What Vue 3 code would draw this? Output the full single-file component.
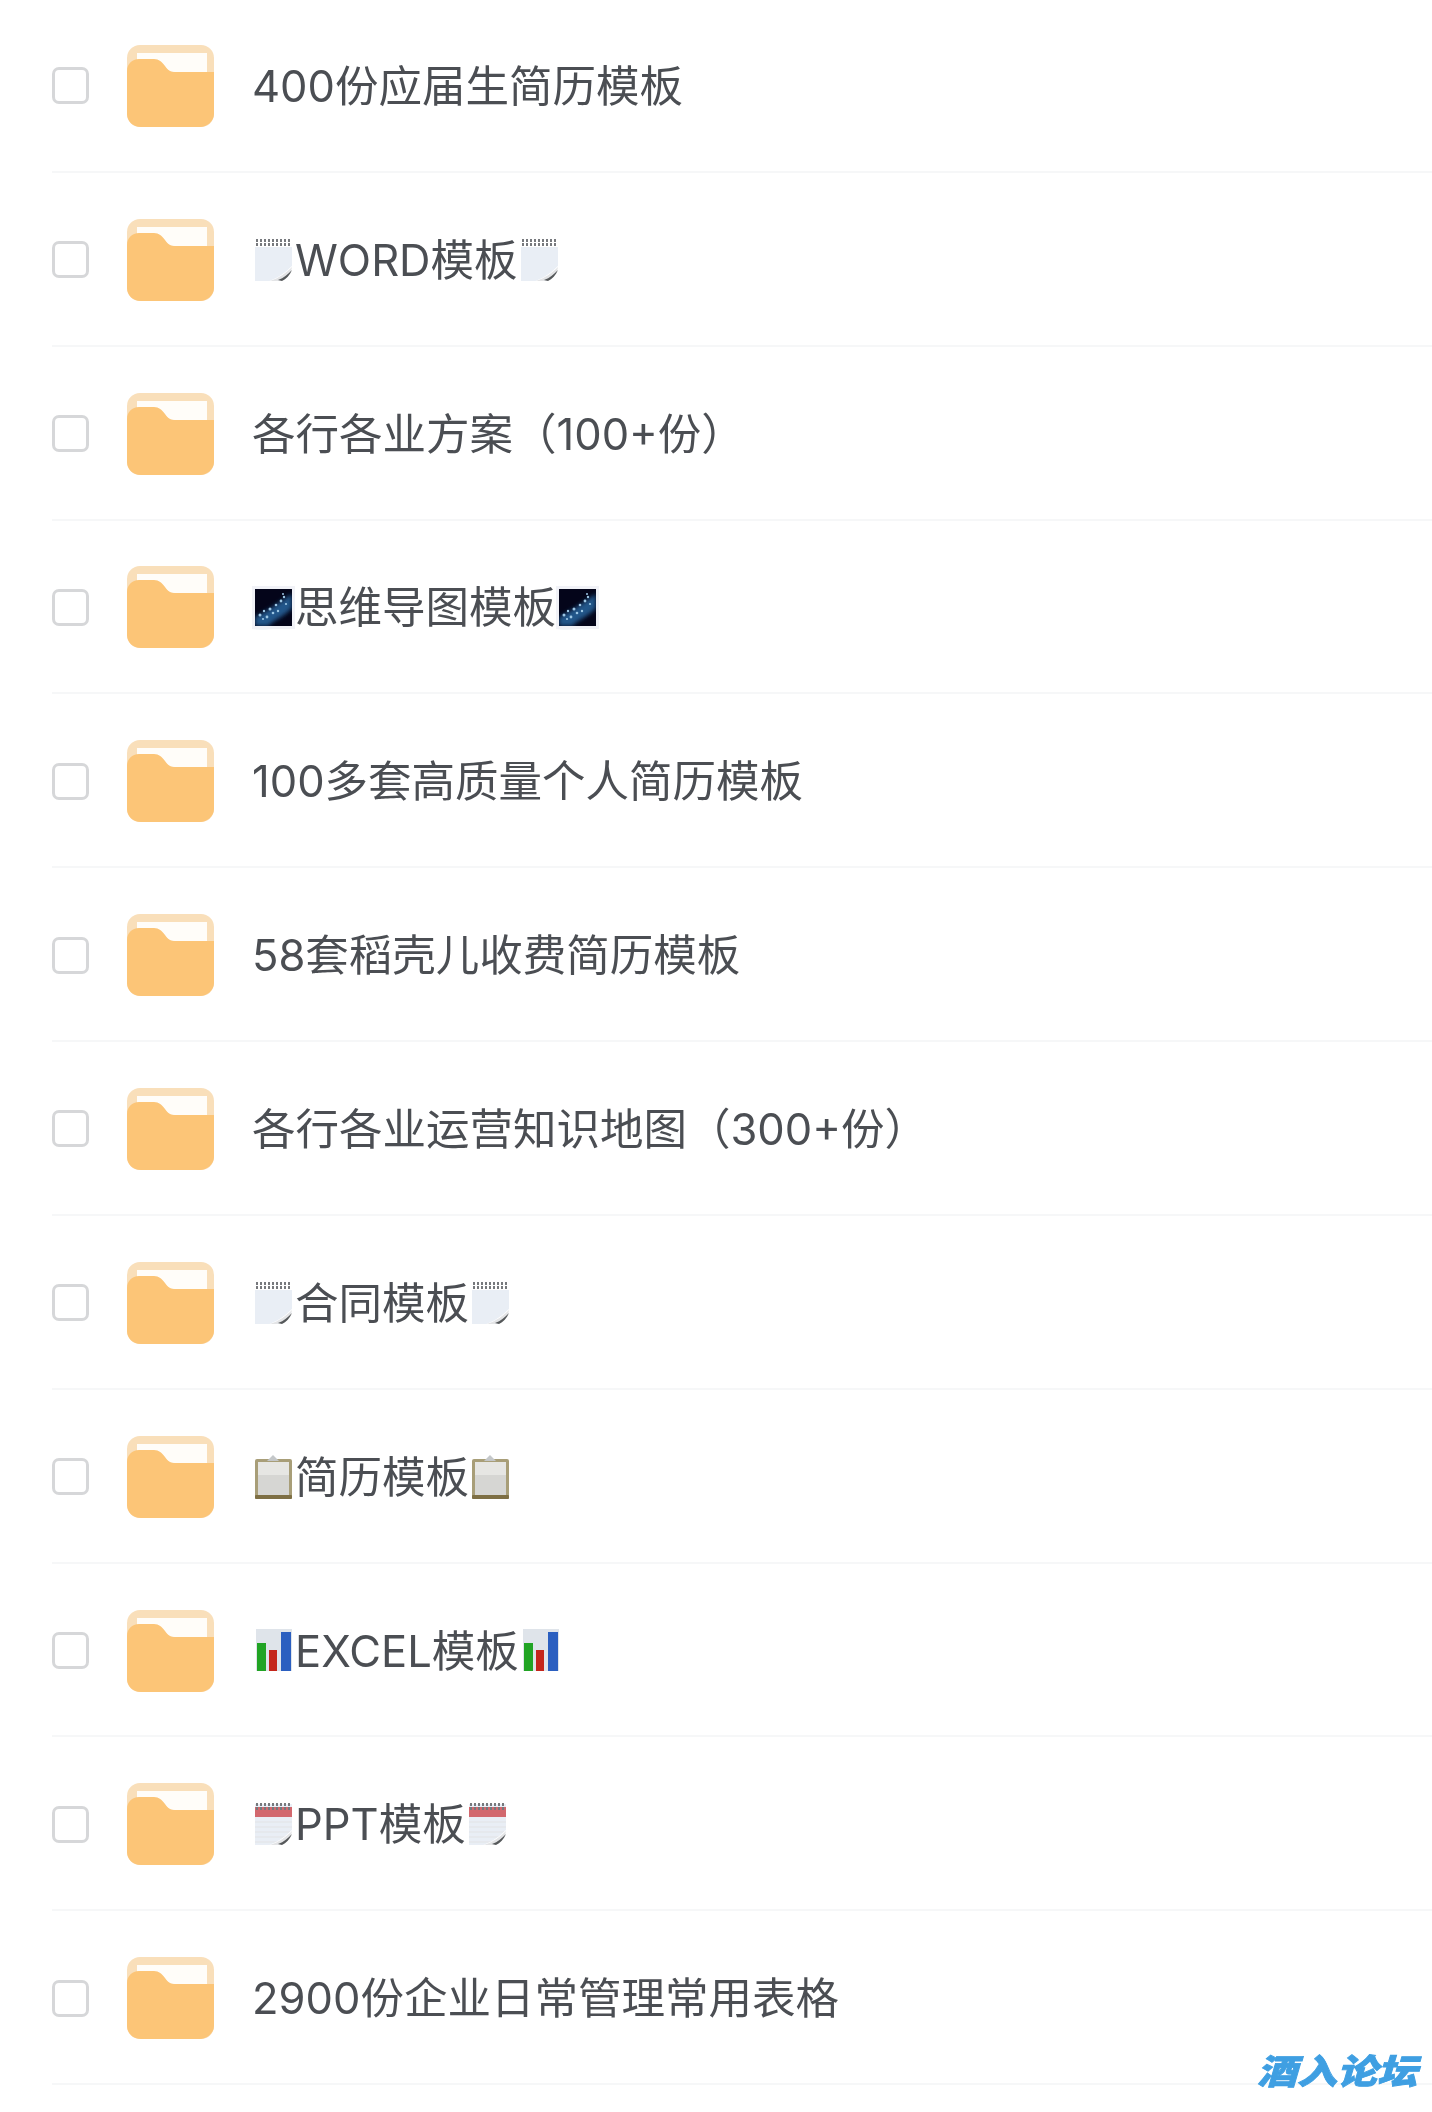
<script setup>
const rows = [
  { icon: "", text: "400份应届生简历模板" },
  { icon: "note", text: "WORD模板" },
  { icon: "", text: "各行各业方案（100+份）" },
  { icon: "galaxy", text: "思维导图模板" },
  { icon: "", text: "100多套高质量个人简历模板" },
  { icon: "", text: "58套稻壳儿收费简历模板" },
  { icon: "", text: "各行各业运营知识地图（300+份）" },
  { icon: "note", text: "合同模板" },
  { icon: "clip", text: "简历模板" },
  { icon: "chart", text: "EXCEL模板" },
  { icon: "cal", text: "PPT模板" },
  { icon: "", text: "2900份企业日常管理常用表格" },
];

const parts = (row) => (row.icon ? [row.icon, "text", row.icon] : ["text"]);

const dots = [4, 8, 12, 16, 20, 24, 28, 32, 36];
const stars = [
  [8, 31, 1.5], [12, 27, 1.2], [15, 33, 1.4], [18, 25, 1.5], [21, 29, 1.3], [24, 21, 1.3],
  [26, 27, 1.2], [29, 17, 1.4], [32, 13, 1.2], [34, 20, 1.1], [11, 35, 1.1], [31, 10, 1],
];
</script>

<template>
  <div class="page">
    <div class="list">
      <div v-for="(row, i) in rows" :key="i" class="row">
        <span class="check"></span>
        <svg class="folder" viewBox="0 0 87 82">
          <rect width="87" height="82" rx="13" fill="#f9dfba" />
          <path d="M10 8 H80 V27 H48 C42 27 40 24 37 21 C34 18 32 15 27 15 H10 Z" fill="#fffdf9" />
          <path d="M0 26 C0 19 5 14 12 14 H27 C32 14 35 17 38 21 C41 25 43 27 48 27 H87 V69 C87 76 80 82 73 82 H14 C6 82 0 76 0 69 Z" fill="#fcc577" />
        </svg>
        <div class="name">
          <template v-for="(part, n) in parts(row)" :key="n">
            <span v-if="part === 'text'">{{ row.text }}</span>
            <svg v-else-if="part === 'note' || part === 'cal'" class="emoji" viewBox="0 0 43 46">
              <rect x="3" y="3" width="37" height="41" fill="#e9eef5" />
              <rect v-if="part === 'cal'" x="3" y="6" width="37" height="10" fill="#d2686e" />
              <path v-if="part === 'cal'" d="M3 21H40M3 26H40M3 31H40M3 36H40M3 41H40" stroke="#e2e3e5" stroke-width="1" />
              <rect x="3" y="1" width="37" height="9" fill="#fff" v-if="part === 'note'" />
              <g fill="#77797d">
                <rect v-for="d in dots" :key="d" :x="d" y="2" width="2" height="3" />
                <rect v-for="d in dots" :key="'b' + d" :x="d" y="6" width="2" height="3" />
              </g>
              <path d="M14 45 H41 V28 C34 35 25 42 14 45 Z" fill="#fff" />
              <path d="M18 44 C27 41 34 36 40 30 C39 37 34 42 28 44 Z" fill="#e3e4e6" />
              <path d="M26 43 C32 41 36 37 40 33 C38 38 34 42 30 44 Z" fill="#55585a" />
            </svg>
            <svg v-else-if="part === 'galaxy'" class="emoji" viewBox="0 0 43 46">
              <defs>
                <filter id="soft" x="-20%" y="-20%" width="140%" height="140%">
                  <feGaussianBlur stdDeviation="2" />
                </filter>
              </defs>
              <rect x="3" y="5" width="37" height="37" fill="#04051a" />
              <path d="M3 42 V33 C14 28 28 18 40 10 V24 C30 34 22 36 16 42 Z" fill="#24578a" filter="url(#soft)" />
              <circle v-for="s in stars" :key="s[0]" :cx="s[0]" :cy="s[1]" :r="s[2]" fill="#9cc6e4" />
              <path d="M0 2 H43 V45 H0 Z M3 5 V42 H40 V5 Z" fill="#f1f2f7" fill-rule="evenodd" />
            </svg>
            <svg v-else-if="part === 'clip'" class="emoji" viewBox="0 0 43 46">
              <rect x="3" y="5" width="37" height="40" rx="2" fill="#a89e78" />
              <rect x="6" y="8" width="31" height="33" fill="#d6d6d3" />
              <rect x="6" y="8" width="31" height="13" fill="#e6e6e3" />
              <rect x="3" y="41" width="37" height="4" rx="1" fill="#7e6f44" />
              <path d="M15 7 L21 1 L27 7 Z" fill="#c4c7c9" />
            </svg>
            <svg v-else-if="part === 'chart'" class="emoji" viewBox="0 0 43 46">
              <rect x="4" y="1" width="36" height="42" fill="#dfe4ea" />
              <rect x="5" y="15" width="9" height="28" fill="#21a424" />
              <rect x="17" y="22" width="8" height="21" fill="#c4261b" />
              <rect x="29" y="4" width="10" height="39" fill="#2b5fc0" />
            </svg>
          </template>
        </div>
      </div>
    </div>
    <div class="mark">酒入论坛</div>
  </div>
</template>

<style scoped>
.page {
  position: relative;
  width: 1432px;
  height: 2112px;
  overflow: hidden;
  background: #fff;
  font-family: Inter, "Noto Sans CJK SC", sans-serif;
}
.list {
  margin-top: -1px;
  filter: blur(0.5px);
}
.row {
  display: flex;
  align-items: center;
  box-sizing: border-box;
  height: 173.85px;
  margin-left: 52px;
  padding-top: 2px;
  border-bottom: 2px solid #f6f7f8;
}
.check {
  width: 37px;
  height: 37px;
  box-sizing: border-box;
  border: 3px solid #d6d7d9;
  border-radius: 7px;
}
.folder {
  width: 87px;
  height: 82px;
  margin-left: 38px;
}
.name {
  display: flex;
  align-items: center;
  margin-left: 38px;
  font-size: 43.5px;
  line-height: 56px;
  color: #4b4e53;
}
.emoji {
  width: 43px;
  height: 46px;
}
.mark {
  position: absolute;
  left: 1257px;
  top: 2044px;
  font-family: "Noto Sans CJK SC", sans-serif;
  font-size: 40px;
  font-weight: 900;
  font-style: italic;
  line-height: 50px;
  color: #3f9fe2;
  transform: scaleY(0.86);
  -webkit-text-stroke: 1px #3f9fe2;
}
</style>
